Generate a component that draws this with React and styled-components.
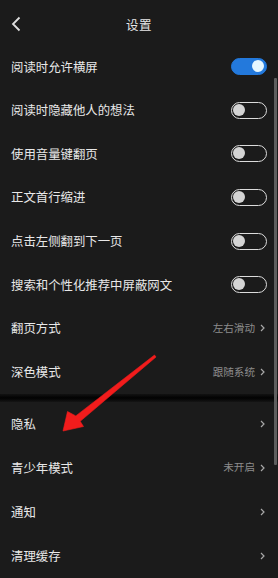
import React from "react";
import styled, { createGlobalStyle } from "styled-components";

const GlobalStyle = createGlobalStyle`
  html, body {
    margin: 0;
    padding: 0;
    background: #1b1b1b;
    overflow: hidden;
  }
  body {
    font-family: "Noto Sans CJK SC", "Noto Sans", sans-serif;
  }
`;

const Page = styled.div`
  position: relative;
  width: 278px;
  height: 578px;
  background: #1b1b1b;
  color: #e6e6e6;
  overflow: hidden;
`;

const Header = styled.div`
  position: relative;
  height: 45px;
  padding-top: 3px;
  box-sizing: border-box;
  display: flex;
  align-items: center;
  justify-content: center;
`;

const BackButton = styled.div`
  position: absolute;
  left: 11px;
  top: 15px;
  width: 12px;
  height: 17px;
  display: flex;
  align-items: center;
`;

const Title = styled.div`
  font-size: 12.5px;
  color: #e8e8e8;
  letter-spacing: 0.5px;
`;

const Section = styled.div`
  display: flex;
  flex-direction: column;
`;

const Row = styled.div`
  height: ${(p) => p.$h}px;
  padding: 0 11px;
  display: flex;
  align-items: center;
  justify-content: space-between;
`;

const Label = styled.span`
  font-size: 12.4px;
  color: #e8e8e8;
  line-height: 1;
`;

const Right = styled.div`
  display: flex;
  align-items: center;
  gap: 5px;
  padding-right: 2px;
`;

const Value = styled.span`
  font-size: 10.6px;
  color: #8c8c8c;
  line-height: 1;
`;

const Toggle = styled.div`
  position: relative;
  width: 36px;
  height: 17px;
  box-sizing: border-box;
  border-radius: 9px;
  border: 1.5px solid ${(p) => (p.$on ? "#2379dc" : "#dcdcdc")};
  background: ${(p) => (p.$on ? "#2379dc" : "transparent")};

  &::after {
    content: "";
    position: absolute;
    top: 1px;
    ${(p) => (p.$on ? "right: 2px;" : "left: 1px;")}
    width: 12px;
    height: 12px;
    border-radius: 50%;
    background: ${(p) => (p.$on ? "#e6f7ff" : "#d4d4d4")};
  }
`;

const Divider = styled.div`
  height: 8px;
  background: linear-gradient(#121212, #030303 45%, #050505 60%, #151515);
`;

const Scrollbar = styled.div`
  position: absolute;
  right: 1px;
  top: 78px;
  width: 3px;
  height: 387px;
  background: #5e5e5e;
  border-radius: 1px;
`;

const ArrowLayer = styled.svg`
  position: absolute;
  left: 0;
  top: 0;
  pointer-events: none;
`;

const Chevron = () => (
  <svg width="5" height="8" viewBox="0 0 5 8">
    <path d="M1 1 L4 4 L1 7" fill="none" stroke="#a8a8a8" strokeWidth="1.2" />
  </svg>
);

const switches = [
  ["阅读时允许横屏", true],
  ["阅读时隐藏他人的想法", false],
  ["使用音量键翻页", false],
  ["正文首行缩进", false],
  ["点击左侧翻到下一页", false],
  ["搜索和个性化推荐中屏蔽网文", false],
];

const links = [
  ["翻页方式", "左右滑动"],
  ["深色模式", "跟随系统"],
];

const more = [
  ["隐私", ""],
  ["青少年模式", "未开启"],
  ["通知", ""],
  ["清理缓存", ""],
];

export default function App() {
  return (
    <Page>
      <GlobalStyle />
      <Header>
        <BackButton>
          <svg width="10" height="16" viewBox="0 0 10 16">
            <path d="M8.5 1.5 L2 8 L8.5 14.5" fill="none" stroke="#dedede" strokeWidth="1.8" />
          </svg>
        </BackButton>
        <Title>设置</Title>
      </Header>

      <Section>
        {switches.map(([label, on]) => (
          <Row key={label} $h={43.6}>
            <Label>{label}</Label>
            <Toggle $on={on} />
          </Row>
        ))}
        {links.map(([label, value]) => (
          <Row key={label} $h={43.6}>
            <Label>{label}</Label>
            <Right>
              <Value>{value}</Value>
              <Chevron />
            </Right>
          </Row>
        ))}
      </Section>

      <Divider />

      <Section>
        {more.map(([label, value]) => (
          <Row key={label} $h={44}>
            <Label>{label}</Label>
            <Right>
              {value && <Value>{value}</Value>}
              <Chevron />
            </Right>
          </Row>
        ))}
      </Section>

      <Scrollbar />

      <ArrowLayer width="278" height="578" viewBox="0 0 278 578">
        <polygon
          points="154.5,355 75.8,415.9 67.5,411.5 63,431 83.5,426.5 80.2,421.3 156,357"
          fill="#f21c1c"
          stroke="#f21c1c"
          strokeWidth="0.6"
          strokeLinejoin="round"
        />
      </ArrowLayer>
    </Page>
  );
}
